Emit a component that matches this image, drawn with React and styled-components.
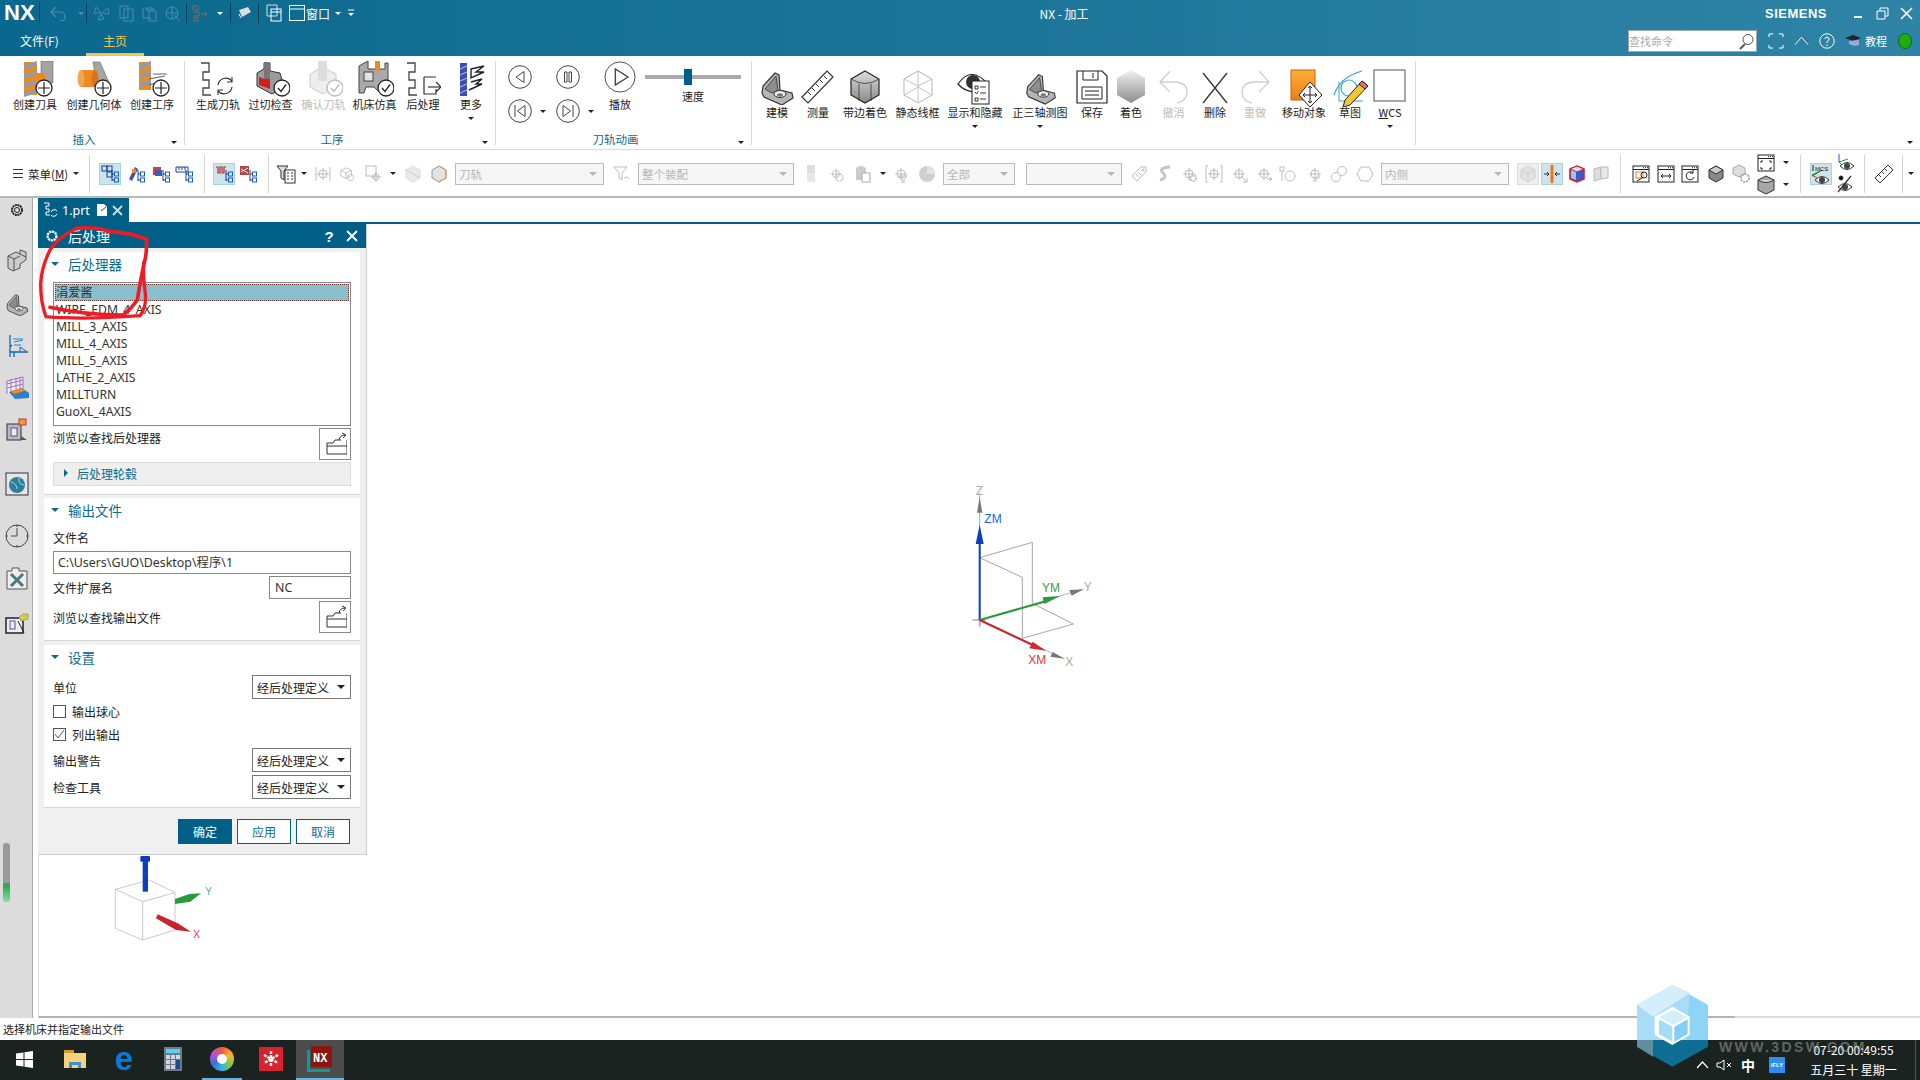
import React from 'react';
import styled, { createGlobalStyle } from 'styled-components';

const Global = createGlobalStyle`
  html, body { margin: 0; padding: 0; background: #fff; overflow: hidden; }
  * { box-sizing: border-box; }
  body { font-family: "Noto Sans CJK SC", "Noto Sans", sans-serif; color: #222; }
`;

const Page = styled.div`position: relative; width: 1920px; height: 1080px; display: flex; flex-direction: column; overflow: hidden; background: #fff;`;
const Head = styled.header`height: 56px; background: linear-gradient(90deg, #0a688e 0%, #1b7598 50%, #2f84a6 100%); color: #fff;`;
const QatRow = styled.div`height: 26px; display: grid; grid-template-columns: 1037px 54px 1fr; align-items: center;`;
const Qat = styled.div`display: flex; align-items: center; height: 26px;`;
const Logo = styled.div`width: 39px; padding-left: 4px; font: bold 22px/26px "Liberation Sans", sans-serif; letter-spacing: 0;`;
const QatSep = styled.span`width: 1px; height: 20px; background: #043f58;`;
const QatSlot = styled.span`width: ${p => p.$w}px; display: flex; justify-content: center; align-items: center; font-size: 12px; color: ${p => p.$dim ? '#4b8ead' : '#fff'};`;
const Tri = styled.span`display: inline-block; width: 0; height: 0; border-left: ${p => p.$s || 3}px solid transparent; border-right: ${p => p.$s || 3}px solid transparent; border-top: ${p => p.$s || 3}px solid ${p => p.$c || '#222'};`;
const AppTitle = styled.div`font-size: 12px; text-align: center; white-space: nowrap;`;
const Brand = styled.div`display: flex; align-items: center; justify-content: flex-end; padding-right: 2px; height: 26px;`;
const Siemens = styled.span`font: bold 13px "Liberation Sans", sans-serif; letter-spacing: .5px; margin-right: 19px;`;
const WinBtn = styled.span`width: 24px; display: flex; justify-content: center;`;
const TabRow = styled.div`height: 30px; display: flex; align-items: stretch;`;
const FileTab = styled.div`margin-left: 20px; width: 66px; font-size: 12px; line-height: 26px; padding-top: 2px;`;
const HomeTab = styled.div`width: 58px; text-align: center; font-size: 12px; line-height: 25px; padding-top: 2px; color: #f4c54a; border-bottom: 3px solid #f4c54a;`;
const TabTools = styled.div`margin-left: auto; display: flex; align-items: center; height: 30px;`;
const Search = styled.div`width: 129px; height: 22px; background: #fff; border: 1px solid #9ca6ab; color: #aaa; font-size: 11px; line-height: 20px; display: flex; justify-content: space-between; align-items: center; padding-right: 2px;`;
const ToolSlot = styled.span`width: ${p => p.$w}px; display: flex; justify-content: center; align-items: center; font-size: 11px; color: #fff;`;

const Ribbon = styled.div`height: 94px; padding-top: 5px; display: flex; align-items: flex-start; border-bottom: 1px solid #d9d9d9; background: #fff;`;
const Group = styled.section`position: relative; width: ${p => p.$w}px; height: 84px; padding-left: ${p => p.$pl || 0}px; border-right: 1px solid #ddd; ${p => p.$grow ? 'flex: 1; border-right: none;' : ''}`;
const Items = styled.div`display: flex; align-items: flex-start; margin-top: ${p => p.$mt || 0}px;`;
const GroupName = styled.div`position: absolute; left: 0; right: 16px; bottom: -2px; font-size: 11.5px; line-height: 16px; text-align: center; color: #0a6b8c;`;
const GroupMenu = styled.span`position: absolute; right: 7px; bottom: 1px; display: flex;`;
const Item = styled.div`width: ${p => p.$w}px; display: flex; flex-direction: column; align-items: center;`;
const IconBox = styled.div`height: 35px; display: flex; justify-content: center; align-items: flex-start;`;
const Label = styled.div`font-size: 11px; line-height: 16px; white-space: nowrap; color: ${p => p.$dim ? '#bbb' : '#222'};`;
const Under = styled.div`height: 10px; display: flex; align-items: center; margin-top: 1px;`;
const Play = styled.div`display: flex; align-items: flex-start; padding: 0 0 0 12px;`;
const PlayGrid = styled.div`width: 96px; display: grid; grid-template-columns: 48px 48px; row-gap: 10px; padding-top: 4px;`;
const PlayCell = styled.div`display: flex; align-items: center; gap: 8px;`;
const PlayCol = styled.div`width: 32px; display: flex; flex-direction: column; align-items: center; gap: 3px;`;
const SliderCol = styled.div`width: 96px; margin-left: 9px; display: flex; flex-direction: column; align-items: center; padding-top: 8px;`;
const Track = styled.div`width: 96px; height: 16px; position: relative; display: flex; align-items: center; justify-content: center;`;
const TrackLine = styled.div`width: 100%; height: 4px; background: #aaa;`;
const Thumb = styled.div`position: absolute; left: 39px; top: 0; width: 8px; height: 16px; background: #005f87;`;
const SliderName = styled.div`font-size: 11px; line-height: 16px; margin-top: 3px;`;

const Toolbar = styled.div`height: 48px; display: flex; align-items: center; border-bottom: 2px solid #b8b8b8; padding-top: 1px; background: #fff;`;
const MenuBtn = styled.div`width: 84px; padding-left: 13px; display: flex; align-items: center; gap: 5px; font-size: 11.5px;`;
const MenuU = styled.span`text-decoration: underline;`;
const Bars = styled.span`width: 10px; height: 9px; border-top: 1px solid #333; border-bottom: 1px solid #333; position: relative; &::after { content: ""; position: absolute; left: 0; right: 0; top: 3px; height: 1px; background: #333; }`;
const TSep = styled.span`width: ${p => p.$w}px; display: flex; justify-content: center; &::before { content: ""; width: 1px; height: 38px; background: #d5d5d5; }`;
const Spacer = styled.span`width: ${p => p.$w}px; flex: none;`;
const TIcon = styled.span`width: ${p => p.$w}px; flex: none; display: flex; justify-content: center; align-items: center;`;
const Active = styled.span`width: 22px; height: 22px; display: flex; justify-content: center; align-items: center; background: ${p => p.$gray ? '#eee' : '#cde4ec'}; border: 1px solid ${p => p.$gray ? '#ddd' : '#a9d2df'};`;
const Combo = styled.div`width: ${p => p.$w}px; flex: none; height: 22px; border: 1px solid #bbb; background: #f6f6f6; color: #b5b5b5; font-size: 11.5px; line-height: 20px; padding: 0 6px 0 3px; display: flex; justify-content: space-between; align-items: center;`;
const Stack = styled.span`width: ${p => p.$w}px; flex: none; display: flex; flex-direction: column; align-items: center; gap: ${p => p.$gap || 2}px;`;

const Main = styled.div`height: 820px; display: flex;`;
const Side = styled.aside`width: 33px; background: #dcdcdc; border-right: 1px solid #a9a9a9; position: relative; padding-left: 2px; display: flex; flex-direction: column; align-items: center;`;
const SideIcon = styled.div`height: 24px; margin-top: ${p => p.$gap || 0}px; display: flex; align-items: center; justify-content: center; width: 30px;`;
const Gauge = styled.div`position: absolute; left: 3px; top: 645px; width: 7px; height: 59px; border-radius: 3px; background: linear-gradient(#9a9a9a 0 68%, #35a85a 68% 74%, #7fe39b 100%);`;
const Work = styled.div`flex: 1; padding-left: 5px; display: flex; flex-direction: column;`;
const TabStrip = styled.div`height: 26px; border-bottom: 2px solid #005f87; flex: none;`;
const DocTab = styled.div`width: 91px; height: 24px; background: #005f87; color: #fff; font-size: 12.5px; display: flex; align-items: center; padding-left: 5px; font-family: "Noto Sans", sans-serif;`;
const DocName = styled.span`margin: 0 6px 0 3px;`;
const View = styled.div`flex: 1; position: relative; border-left: 1px solid #ddd; border-bottom: 2px solid #b4b4b4;`;
const Dialog = styled.div`width: 329px; margin-left: -1px; background: #f0f0f0; border-right: 1px solid #ccc; border-bottom: 1px solid #ccc; font-size: 12px;`;
const DialogHead = styled.div`height: 24px; background: #005f87; color: #fff; display: flex; align-items: center; padding: 0 2px 0 7px; font-size: 14px;`;
const DialogTitle = styled.span`margin-left: 9px; flex: 1;`;
const HeadBtn = styled.span`width: ${p => p.$w}px; display: flex; justify-content: center; font: bold 15px "Liberation Sans", sans-serif;`;
const Body = styled.div`padding: 4px 6px 0;`;
const Sec = styled.section`background: #fff; border-bottom: 1px solid #d6d6d6; padding: 0 9px ${p => p.$pb || 8}px; margin-bottom: ${p => p.$mb ?? 3}px;`;
const SecHead = styled.div`height: 26px; padding-bottom: 2px; display: flex; align-items: center; gap: 9px; margin-left: -2px; font-size: 13.5px; color: #0a6b8c;`;
const PostList = styled.div`height: 144px; margin-top: 4px; border: 1px solid #888; padding: 1px; font: 12.2px/17px "Noto Sans", "Noto Sans CJK SC", sans-serif; color: #333;`;
const PostRow = styled.div`height: 17px; padding-left: 1px; white-space: nowrap; ${p => p.$on ? 'background: #8bbfcf; outline: 1px dotted #7a3a30; outline-offset: -1px;' : ''}`;
const BrowseRow = styled.div`height: 32px; margin-top: ${p => p.$mt}px; display: flex; justify-content: space-between; align-items: ${p => p.$center ? 'center' : 'flex-start'}; line-height: ${p => p.$center ? 'normal' : '20px'};`;
const IconBtn = styled.span`width: 32px; height: 32px; border: 1px solid #888; background: #fff; display: flex; justify-content: center; align-items: center;`;
const SubPanel = styled.div`height: 24px; margin-top: 2px; background: #eee; border: 1px solid #ddd; color: #0a6b8c; display: flex; align-items: center; padding: 0 0 2px 10px; gap: 9px; font-size: 12px;`;
const FieldLabel = styled.div`height: 27px; line-height: 27px;`;
const Input = styled.div`height: 23px; border: 1px solid #888; padding-left: ${p => p.$pl || 4}px; font: 12.4px/21px "Noto Sans", "Noto Sans CJK SC", sans-serif; width: ${p => p.$w ? p.$w + 'px' : 'auto'}; color: #333;`;
const FieldRow = styled.div`display: flex; justify-content: space-between; align-items: center; margin-top: ${p => p.$mt || 0}px;`;
const Select = styled.div`width: 99px; height: 24px; border: 1px solid #777; padding: 0 5px 0 4px; display: flex; justify-content: space-between; align-items: center; font-size: 12px;`;
const CheckRow = styled.label`height: 23px; display: flex; align-items: center; gap: 6px;`;
const CheckGroup = styled.div`margin-top: 1px;`;
const Box = styled.span`width: 13px; height: 13px; border: 1px solid #555; display: flex; align-items: center; justify-content: center;`;
const Actions = styled.div`display: flex; justify-content: flex-end; gap: 5px; padding: 11px 16px 10px 0;`;
const Btn = styled.button`width: 54px; height: 25px; padding: 0; font: 12px "Noto Sans CJK SC", sans-serif; border: 1px solid #005f87; background: ${p => p.$primary ? '#005f87' : '#fff'}; color: ${p => p.$primary ? '#fff' : '#0a6b8c'};`;
const TriadMain = styled.svg`position: absolute; left: 902px; top: 236px;`;
const TriadSmall = styled.svg`position: absolute; left: 62px; top: 631px;`;

const Status = styled.div`height: 22px; font-size: 11px; line-height: 22px; padding-left: 3px; color: #222; background: #fff;`;
const Taskbar = styled.footer`height: 40px; background: #1b2321; display: flex; align-items: stretch; color: #fff;`;
const TaskIcon = styled.div`width: ${p => p.$w}px; margin-left: ${p => p.$ml || 0}px; padding-left: ${p => p.$pl || 0}px; display: flex; align-items: center; justify-content: center; background: ${p => p.$on ? '#4a4d4b' : 'transparent'}; border-bottom: 2px solid ${p => p.$line ? '#6ab0de' : 'transparent'};`;
const EdgeE = styled.span`font: bold 33px/36px "Liberation Sans", sans-serif; color: #0a78d7;`;
const Swirl = styled.span`width: 24px; height: 24px; border-radius: 50%; background: conic-gradient(#f05a3c, #f9b233, #8cc63f, #2fb8e6, #3f6fd8, #b84fd0, #f05a3c); display: flex; align-items: center; justify-content: center; &::after { content: ""; width: 10px; height: 10px; border-radius: 50%; background: #fff; }`;
const Tray = styled.div`margin-left: auto; display: flex; align-items: center; padding-top: 10px;`;
const TraySlot = styled.span`width: ${p => p.$w}px; display: flex; justify-content: center; align-items: center; font-size: 14px; font-weight: 700;`;
const Clock = styled.div`width: 123px; margin-top: -10px; font-size: 12px; line-height: 20px; text-align: center;`;
const TrayEdge = styled.span`width: 5px; align-self: stretch; margin-top: -10px; border-left: 1px solid #555;`;
const Fly = styled.span`width: 16px; height: 16px; background: #2f8cf0; font: bold 6px/16px "Liberation Sans", sans-serif; text-align: center; color: #fff;`;
const Scribble = styled.svg`position: absolute; left: 38px; top: 222px; pointer-events: none;`;
const Mark = styled.svg`position: absolute; left: 1633px; top: 980px; pointer-events: none;`;
const MarkText = styled.div`position: absolute; left: 1719px; top: 1039px; font: bold 14px/16px "Liberation Sans", sans-serif; letter-spacing: 2.4px; color: rgba(170,170,170,.5); pointer-events: none;`;
const MarkGlow = styled.div`position: absolute; left: 1735px; top: 1013px; width: 185px; height: 9px; background: rgba(255,255,255,.55); pointer-events: none;`;

const Svg = ({ w = 20, h = 20, vb, children }) => <svg width={w} height={h} viewBox={vb || `0 0 ${w} ${h}`} fill="none">{children}</svg>;

const Mill = ({ x, y, w = 13, h = 32 }) => {
  const bands = [];
  for (let i = 0; i * 9 < h - 4; i++) bands.push(<polygon key={i} points={`${x},${y + i * 9 + 3} ${x + w},${y + i * 9 - 1} ${x + w},${y + i * 9 + 4} ${x},${y + i * 9 + 8}`} fill="#9a9a9a" />);
  return <g><rect x={x} y={y} width={w} height={h} fill="#ee8a1f" />{bands}</g>;
};
const Badge = ({ type = 'plus', dim }) => (
  <g>
    <circle cx="27" cy="27" r="8" fill="#fff" stroke={dim ? '#bbb' : '#222'} strokeWidth="1.3" />
    {type === 'plus'
      ? <path d="M27 21v12M21 27h12" stroke="#222" strokeWidth="1.2" />
      : <path d="M23 27l3 3.5 5-7" stroke={dim ? '#bbb' : '#222'} strokeWidth="1.3" />}
  </g>
);
const SCurve = ({ c = '#444' }) => <path d="M2 2h8v9H4v8h6v8H4v7h8" stroke={c} strokeWidth="1.3" />;

const bracket = (s = 1) => (
  <g transform={`scale(${s})`}>
    <path d="M3 24L4 17 16 4l4 2 1 15 12 3 1 5-11 7-18-8z" fill="#b5b5b5" stroke="#333" strokeWidth="1.2" />
    <path d="M6 20L17 7l2 14-6 3z" fill="#8d8d8d" stroke="#333" strokeWidth=".8" />
    <ellipse cx="21" cy="25" rx="6" ry="3.5" fill="#eee" stroke="#333" />
    <ellipse cx="21" cy="26" rx="3" ry="1.7" fill="#777" />
  </g>
);

const big = {
  createTool: <Svg w={42} h={36}><Mill x={10} y={1} h={33} /><rect x="27" y="0" width="12" height="22" fill="#a3a3a3" stroke="#555" strokeWidth=".5" /><rect x="22" y="12" width="9" height="10" fill="#ef8a1e" /><g transform="translate(3,0)"><Badge /></g></Svg>,
  createGeom: <Svg w={42} h={36}><polygon points="20,1 27,1 38,26 30,34 24,28" fill="#a5a5a5" stroke="#666" strokeWidth=".6" /><rect x="8" y="9" width="14" height="17" fill="#ee8a1f" /><ellipse cx="8" cy="17.5" rx="3.5" ry="8.5" fill="#f5a64c" /><ellipse cx="22" cy="17.5" rx="3.5" ry="8.5" fill="#d9741a" /><g transform="translate(3,0)"><Badge /></g></Svg>,
  createOp: <Svg w={42} h={36}><Mill x={8} y={1} w={12} h={28} /><path d="M22 13h14M18 18l16-3M18 24l10-3" stroke="#666" strokeWidth="1.2" /><g transform="translate(3,0)"><Badge /></g></Svg>,
  genPath: <Svg w={38} h={36}><SCurve /><path d="M19 24a8 8 0 0 1 14-4M33 26a8 8 0 0 1-14 4" stroke="#333" strokeWidth="1.2" /><path d="M33 16v5h-5M19 34v-5h5" stroke="#333" strokeWidth="1.1" /></Svg>,
  gouge: <Svg w={38} h={36}><polygon points="5,12 12,8 12,2 18,2 18,10 28,12 32,26 20,33 5,25" fill="#9c9c9c" stroke="#333" /><rect x="12" y="1" width="6" height="20" fill="#777" /><polygon points="7,16 13,18 18,18 18,28 7,24" fill="#d11f1f" /><g transform="translate(3,0)"><Badge type="check" /></g></Svg>,
  verify: <Svg w={38} h={36}><polygon points="5,13 17,6 31,13 31,26 18,33 5,26" fill="#eee" stroke="#ccc" /><rect x="13" y="0" width="9" height="20" fill="#ddd" /><g transform="translate(3,0)"><Badge type="check" dim /></g></Svg>,
  sim: <Svg w={38} h={36}><polygon points="3,5 12,0 12,8 29,8 29,2 32,2 32,30 22,30 18,26 10,26 8,32 3,32" fill="#aaa" stroke="#444" /><rect x="8" y="11" width="9" height="9" fill="#e2e2e2" stroke="#444" /><rect x="19" y="0" width="5" height="10" fill="#ee8a1f" /><g transform="translate(3,0)"><Badge type="check" /></g></Svg>,
  post: <Svg w={36} h={36}><SCurve /><path d="M19 16h12M19 16v17h12v-5M31 21l5 5-5 5" stroke="#333" strokeWidth="1.2" /><path d="M23 26h13" stroke="#333" strokeWidth="1.2" /></Svg>,
  more: <Svg w={34} h={36}><rect x="6" y="2" width="7" height="33" fill="#3a4fb0" /><path d="M6 8l7-3M6 14l7-3M6 20l7-3M6 26l7-3M6 32l7-3" stroke="#9db0ea" strokeWidth="1.2" /><path d="M17 8l13-3-8 6h8L17 17zM17 21l11-3-6 5h6l-13 6" stroke="#222" strokeWidth="1.4" /></Svg>,
  model: <Svg w={36} h={36}>{bracket()}</Svg>,
  measure: <Svg w={36} h={36}><polygon points="2,28 27,2 33,8 8,34" fill="#fff" stroke="#333" strokeWidth="1.2" /><path d="M8 23l3 3M12 19l3 3M16 15l3 3M20 11l3 3M24 7l3 3" stroke="#333" /></Svg>,
  edges: <Svg w={36} h={36}><defs><linearGradient id="g1" x1="0" x2="0" y1="0" y2="1"><stop offset="0" stopColor="#ddd" /><stop offset="1" stopColor="#888" /></linearGradient></defs><polygon points="18,2 32,10 32,26 18,34 4,26 4,10" fill="url(#g1)" stroke="#222" strokeWidth="1.2" /><path d="M4 10q14 9 28 0M12 15v17M24 15v17" stroke="#333" strokeWidth=".8" /></Svg>,
  wire: <Svg w={36} h={36}><polygon points="18,2 32,10 32,26 18,34 4,26 4,10" stroke="#b5b5b5" /><path d="M4 10l14 7 14-7M18 2v15M18 17v17M4 26l14-8 14 8" stroke="#c4c4c4" /></Svg>,
  showHide: <Svg w={36} h={36}><path d="M1 15q13-19 30 0q-5 7-14 8q-10-1-16-8z" fill="#fff" stroke="#222" strokeWidth="1.2" /><circle cx="16" cy="13" r="7" fill="#333" /><rect x="15" y="12" width="17" height="23" fill="#fff" stroke="#222" /><path d="M18 17h3v3h-3zM23 18h6M18 23l1.5 2 2-3M23 24h6M18 29h3v3h-3zM23 30h6" stroke="#222" strokeWidth=".9" /></Svg>,
  tri: <Svg w={36} h={36}><g transform="translate(2,2) scale(.92)">{bracket()}</g></Svg>,
  save: <Svg w={34} h={36}><path d="M2 2h25l5 5v27H2z" fill="#fff" stroke="#222" strokeWidth="1.2" /><path d="M8 2v9h15V2M18 4v5M7 18h20v12H7zM10 22h14M10 26h14" stroke="#222" /></Svg>,
  shaded: <Svg w={34} h={36}><defs><linearGradient id="g2" x1="0" x2="0" y1="0" y2="1"><stop offset="0" stopColor="#f1f1f1" /><stop offset="1" stopColor="#8d8d8d" /></linearGradient></defs><polygon points="17,1 31,9 31,26 17,34 3,26 3,9" fill="url(#g2)" /></Svg>,
  undo: <Svg w={34} h={36}><path d="M13 2L3 13l10 10M3 13h16q11 1 11 10 0 9-10 11" stroke="#cfcfcf" strokeWidth="1.3" /></Svg>,
  del: <Svg w={30} h={36}><path d="M3 4l24 30M27 4L3 34" stroke="#333" strokeWidth="1.3" /></Svg>,
  redo: <Svg w={34} h={36}><path d="M21 2l10 11-10 10M31 13H15Q4 14 4 23q0 9 10 11" stroke="#cfcfcf" strokeWidth="1.3" /></Svg>,
  move: <Svg w={36} h={38}><defs><linearGradient id="g3" x1="0" x2="0" y1="0" y2="1"><stop offset="0" stopColor="#fbb034" /><stop offset="1" stopColor="#ee7d1a" /></linearGradient></defs><rect x="5" y="1" width="24" height="30" fill="url(#g3)" stroke="#c5600f" /><polygon points="24,13 36,26 24,38 13,26" fill="#fff" stroke="#222" /><path d="M24 17v17M17 26h14M22 19l2-2 2 2M22 32l2 2 2-2M19 24l-2 2 2 2M29 24l2 2-2 2" stroke="#222" /></Svg>,
  sketch: <Svg w={36} h={38}><path d="M2 26Q8 8 30 2" stroke="#2aa9d6" strokeWidth="1.2" /><circle cx="17" cy="19" r="8" stroke="#2aa9d6" strokeWidth="1.2" /><path d="M7 13v19h24" stroke="#2aa9d6" /><polygon points="30,12 36,17 18,36 11,38 13,31" fill="#f3c63a" stroke="#222" /><polygon points="30,12 36,17 33,20 27,15" fill="#e87070" stroke="#222" /></Svg>,
  wcs: <Svg w={34} h={38}><rect x="1" y="1" width="31" height="31" fill="#fff" stroke="#8a8a8a" strokeWidth="1.5" /></Svg>,
};

const Tree = ({ a = '#1c5cb0', top }) => <Svg w={18} h={18}>{top}<path d="M11 5v11M11 9h3M11 15h3" stroke="#123e9a" /><rect x="13.5" y="7" width="4" height="4" stroke={a} /><rect x="13.5" y="13" width="4" height="4" stroke={a} /></Svg>;
const Grey = ({ w = 18, children }) => <Svg w={w} h={18}><g stroke="#bdbdbd" fill="none">{children}</g></Svg>;
const Cross = () => <g><circle cx="9" cy="9" r="4" /><path d="M9 3v12M3 9h12" /></g>;
const Win = ({ children }) => <Svg w={18} h={20}><rect x="1" y="2" width="16" height="16" fill="#fff" stroke="#222" /><path d="M1 5.5h16" stroke="#222" /><path d="M11 3.7h1M13 3.7h1M15 3.7h1" stroke="#222" />{children}</Svg>;
const Eye = ({ x = 0, y = 0 }) => <g transform={`translate(${x},${y})`}><path d="M1 7q7-7 14 0q-7 7-14 0z" fill="#fff" stroke="#333" /><circle cx="8" cy="7" r="3" fill="#444" /></g>;

const small = {
  t1: <Tree top={<g><rect x="1" y="1" width="5" height="5" stroke="#123e9a" /><rect x="6" y="1" width="5" height="5" stroke="#123e9a" /><rect x="6" y="7" width="5" height="5" stroke="#123e9a" /></g>} />,
  t2: <Tree top={<g><polygon points="2,14 8,2 11,4 5,16" fill="#3953b5" /><rect x="5" y="4" width="4" height="4" fill="#ee8a1f" /></g>} />,
  t3: <Tree top={<g><rect x="1" y="2" width="8" height="8" fill="#d0403a" /><rect x="3" y="5" width="7" height="6" fill="#3560c0" /></g>} />,
  t4: <Tree top={<path d="M1 2h12M1 2v5h12V2M4 2v3M7 2v3M10 2v3" stroke="#1c3d9a" />} />,
  t5: <Tree top={<path d="M1 2h2v6h2V2h2v6h2V2h2" stroke="#c12a2a" strokeWidth="1.2" />} />,
  t6: <Tree top={<g><rect x="1" y="1" width="9" height="9" fill="#b04848" /><path d="M2 4l7 4M2 7l7-4" stroke="#eee" /></g>} />,
  filter: <Svg w={22} h={20}><path d="M1 2h11L8 7v9L5 14V7z" fill="#ddd" stroke="#333" /><rect x="9" y="6" width="10" height="13" fill="#fff" stroke="#333" /><path d="M11 9h2M15 9h2M11 12h2M15 12h2M11 15h2M15 15h2" stroke="#333" /></Svg>,
  gCross: <Grey><Cross /><path d="M2 2v14M16 2v14" /></Grey>,
  gCube: <Grey><path d="M2 5l6-3 6 3v6l-6 3-6-3zM2 5l6 3 6-3M8 8v6" /><circle cx="13" cy="13" r="3.5" /></Grey>,
  gSq: <Grey><rect x="2" y="1" width="10" height="10" /><circle cx="12" cy="12" r="3" /><path d="M12 7v10M7 12h10" /></Grey>,
  gHex: <Svg w={18} h={18}><polygon points="9,1 16,5 16,13 9,17 2,13 2,5" fill="#e9e9e9" stroke="#ddd" /><path d="M2 5l7 4 7 4" stroke="#ccc" /></Svg>,
  cube2: <Svg w={18} h={18}><polygon points="9,1 16,5 16,13 9,17 2,13 2,5" fill="#e2e2e2" stroke="#999" /><path d="M9 1l7 4v8l-7 4" stroke="#d9925a" /></Svg>,
  gFilter: <Grey><path d="M2 2h13L10 8v7L7 13V8z" /><path d="M12 13a3 3 0 0 1 5 1" /></Grey>,
  gParts: <Svg w={18} h={20}><rect x="5" y="1" width="8" height="8" fill="#ddd" /><rect x="5" y="9" width="8" height="9" fill="#e8e8e8" /></Svg>,
  gLink: <Grey><Cross /><circle cx="13" cy="13" r="4" /></Grey>,
  gDoc: <Svg w={20} h={20}><ellipse cx="9" cy="5" rx="5" ry="3" fill="#ccc" /><rect x="4" y="5" width="10" height="11" fill="#ccc" /><rect x="10" y="9" width="8" height="9" fill="#fff" stroke="#aaa" /></Svg>,
  gFunnel: <Grey><Cross /><path d="M7 11h8l-3 3v4l-2-1v-3z" /></Grey>,
  gPie: <Svg w={18} h={18}><circle cx="9" cy="9" r="8" fill="#cfcfcf" /><path d="M9 1a8 8 0 0 1 8 8H9z" fill="#e2e2e2" /></Svg>,
  gTag: <Grey><path d="M2 11l9-9h5v5l-9 9z" /><circle cx="13" cy="5" r="1" /><path d="M6 9l3 3M8 7l3 3" /></Grey>,
  gSnake: <Svg w={18} h={20}><path d="M4 16q8-2 3-7t7-6" stroke="#c5c5c5" strokeWidth="3" /></Svg>,
  gGear: <Grey><Cross /><circle cx="13" cy="13" r="3" strokeDasharray="2 1" strokeWidth="2" /></Grey>,
  gBr: <Grey><Cross /><path d="M3 1H1v16h2M15 1h2v16h-2" /></Grey>,
  gArr: <Grey><Cross /><path d="M11 11l6 6M13 17h4v-4" /></Grey>,
  gTurn: <Grey><Cross /><path d="M12 14h5M14 12l3 2-3 2" /></Grey>,
  gTree: <Grey><rect x="1" y="2" width="4" height="4" /><path d="M3 6v10" /><circle cx="11" cy="11" r="5" /></Grey>,
  gStep: <Grey><Cross /><path d="M7 16h3v-3h3v-3" /></Grey>,
  gChain: <Grey><circle cx="6" cy="12" r="4.5" /><circle cx="12" cy="6" r="4.5" /></Grey>,
  gHexO: <Grey><polygon points="5,2 13,2 17,9 13,16 5,16 1,9" /></Grey>,
  gBox: <Svg w={18} h={18}><polygon points="9,1 16,5 16,13 9,17 2,13 2,5" fill="#e2e2e2" stroke="#cfcfcf" /><path d="M2 5l7 4 7-4M9 9v8" stroke="#ccc" /></Svg>,
  mid: <Svg w={18} h={18}><path d="M9 0v18" stroke="#e87b14" strokeWidth="3" /><path d="M1 9h5M12 9h5M4 7l2 2-2 2M14 7l-2 2 2 2" stroke="#333" /></Svg>,
  redCube: <Svg w={18} h={18}><polygon points="9,1 16,4 16,14 9,17 2,14 2,4" fill="#3a5cc8" stroke="#e21a2c" strokeWidth="1.6" /><polygon points="2,4 9,1 16,4 9,7" fill="#cfe3f8" stroke="#e21a2c" /><polygon points="3,5 8,7 8,15 3,13" fill="#9fc3ee" /></Svg>,
  book: <Svg w={18} h={18}><polygon points="2,4 9,2 9,14 2,16" fill="#ddd" stroke="#bbb" /><polygon points="9,2 16,2 16,13 9,14" fill="#e9e9e9" stroke="#bbb" /></Svg>,
  w1: <Win><rect x="4" y="8" width="7" height="6" stroke="#e0821e" /><circle cx="12" cy="11" r="3" stroke="#222" /><path d="M5 17l5-3" stroke="#222" /></Win>,
  w2: <Win><path d="M4 12h10M4 12l2-2M4 12l2 2M14 12l-2-2M14 12l-2 2" stroke="#222" /></Win>,
  w3: <Win><path d="M12 9a4 4 0 1 0 1 4M12 6v3h-3" stroke="#222" /></Win>,
  s1: <Svg w={18} h={18}><polygon points="9,1 16,5 16,13 9,17 2,13 2,5" fill="#888" stroke="#333" /><polygon points="9,1 16,5 9,9 2,5" fill="#ccc" stroke="#333" /></Svg>,
  s2: <Svg w={20} h={20}><polygon points="8,1 14,4 14,10 8,13 2,10 2,4" fill="#ddd" stroke="#aaa" /><circle cx="14" cy="14" r="4" stroke="#aaa" strokeWidth="2" strokeDasharray="2 1" /></Svg>,
  s3: <Win><path d="M4 8h2M4 8v2M14 8h-2M14 8v2M4 16h2M4 16v-2M14 16h-2M14 16v-2" stroke="#222" /></Win>,
  s4: <Svg w={18} h={20}><polygon points="9,1 17,5 17,15 9,19 1,15 1,5" fill="#a7a7a7" stroke="#333" /><path d="M1 5q8 5 16 0" stroke="#333" fill="#ddd" /></Svg>,
  mcs: <svg width="19" height="20" viewBox="0 0 19 20"><path d="M2 1v6M1 12L11 6" stroke="#222" /><text x="4" y="7" fontSize="6" fontFamily="Liberation Sans" fill="#222">MCS</text><path d="M1 11l5 3" stroke="#d22" /><path d="M1 11l8-4" stroke="#2a2" /><Eye x={3} y={9} /></svg>,
  eye1: <svg width="18" height="18" viewBox="0 0 18 18"><path d="M3 0v8" stroke="#1864c4" /><path d="M3 8l9-3" stroke="#2a2" /><path d="M3 8l3 3" stroke="#d22" /><Eye x={3} y={5} /></svg>,
  eye2: <svg width="18" height="20" viewBox="0 0 18 20"><Eye x={1} y={6} /><path d="M2 18L15 2" stroke="#333" strokeWidth="1.2" /><circle cx="5" cy="4" r="2" stroke="#333" /></svg>,
  ruler: <Svg w={20} h={20}><polygon points="1,14 14,1 19,6 6,19" fill="#fff" stroke="#333" /><path d="M5 11l2 2M8 8l2 2M11 5l2 2" stroke="#333" /></Svg>,
};

const toolbarItems = [
  ['sep', 10], ['sp', 3], ['ic', 26, 't1', 'a'], ['ic', 26, 't2'], ['ic', 24, 't3'], ['ic', 22, 't4'], ['sp', 4], ['sep', 10],
  ['ic', 30, 't5', 'a'], ['ic', 18, 't6'], ['sp', 6], ['sep', 10], ['ic', 28, 'filter'], ['ar', 6], ['ic', 32, 'gCross'], ['ic', 16, 'gCube'],
  ['ic', 35, 'gSq'], ['ar', 6], ['ic', 34, 'gHex'], ['ic', 18, 'cube2'], ['sp', 7], ['co', 149, '刀轨'], ['ic', 34, 'gFilter'], ['co', 156, '整个装配'],
  ['ic', 34, 'gParts'], ['ic', 16, 'gLink'], ['ic', 36, 'gDoc'], ['ar', 6], ['ic', 30, 'gFunnel'], ['ic', 22, 'gPie'], ['sp', 5], ['co', 72, '全部'], ['sp', 11], ['co', 96, ''],
  ['ic', 34, 'gTag'], ['ic', 18, 'gSnake'], ['ic', 30, 'gGear'], ['ic', 20, 'gBr'], ['ic', 30, 'gArr'], ['ic', 20, 'gTurn'], ['ic', 28, 'gTree'], ['ic', 26, 'gStep'], ['ic', 22, 'gChain'], ['ic', 30, 'gHexO'],
  ['sp', 1], ['co', 128, '内侧'], ['sp', 8], ['ic', 22, 'gBox', 'g'], ['sp', 2], ['ic', 22, 'mid', 'a'], ['ic', 28, 'redCube'], ['ic', 20, 'book'], ['sp', 4], ['sep', 10],
  ['ic', 32, 'w1'], ['ic', 18, 'w2'], ['ic', 30, 'w3'], ['ic', 22, 's1'], ['ic', 28, 's2'], ['st', 22, 's3', 's4'], ['ars', 18], ['sep', 10], ['sp', 4], ['ic', 23, 'mcs', 'a'], ['st', 26, 'eye1', 'eye2'], ['sep', 12], ['ic', 28, 'ruler'], ['sep', 8], ['ar', 10],
];

const ToolEntry = ({ it }) => {
  const [k, w, a, b] = it;
  if (k === 'sep') return <TSep $w={w} />;
  if (k === 'sp') return <Spacer $w={w} />;
  if (k === 'co') return <Combo $w={w}><span>{a}</span><Tri $s={4} $c="#b5b5b5" /></Combo>;
  if (k === 'ar') return <TIcon $w={w}><Tri $c="#222" /></TIcon>;
  if (k === 'ars') return <Stack $w={w} $gap={19}><Tri /><Tri /></Stack>;
  if (k === 'st') return <Stack $w={w}>{small[a]}{small[b]}</Stack>;
  return <TIcon $w={w}>{b ? <Active $gray={b === 'g'}>{small[a]}</Active> : small[a]}</TIcon>;
};

const RItem = ({ w, icon, label, dim, menu, u }) => (
  <Item $w={w}>
    <IconBox>{big[icon]}</IconBox>
    <Label $dim={dim}>{u ? <MenuU>W</MenuU> : null}{label}</Label>
    {menu && <Under><Tri /></Under>}
  </Item>
);

const PlayBtn = ({ kind, size = 24 }) => (
  <svg width={size} height={size} viewBox="0 0 24 24">
    <circle cx="12" cy="12" r="11.3" fill="#fff" stroke="#444" strokeWidth={size > 24 ? .7 : 1} />
    {kind === 'back' && <path d="M16 6.5v11L8 12z" stroke="#444" fill="none" />}
    {kind === 'pause' && <path d="M8.5 7h2.5v10H8.5zM13 7h2.5v10H13z" stroke="#444" fill="none" />}
    {kind === 'prev' && <path d="M17 6.5v11L9.5 12zM7 6v12" stroke="#444" fill="none" />}
    {kind === 'next' && <path d="M7 6.5v11L14.5 12zM17 6v12" stroke="#444" fill="none" />}
    {kind === 'play' && <path d="M8.5 6v12L18 12z" stroke="#444" fill="none" />}
  </svg>
);

const FolderBtn = () => (
  <IconBtn>
    <Svg w={24} h={24}><path d="M4 11v11h20V8M4 11h6l2-3h6" stroke="#333" fill="none" /><path d="M4 14h20" stroke="#333" /><path d="M16 8q1-5 6-5M19 1l4 2-3 3" stroke="#333" /></Svg>
  </IconBtn>
);

const ChoiceRow = ({ label, mt }) => (
  <FieldRow $mt={mt}><span>{label}</span><Select><span>经后处理定义</span><Tri $s={4} /></Select></FieldRow>
);

const QatDim = ({ w, children }) => <QatSlot $w={w} $dim>{children}</QatSlot>;

export default function App() {
  const dim = '#4b8ead';
  return (
    <Page>
      <Global />
      <Head>
        <QatRow>
          <Qat>
            <Logo>NX</Logo><QatSep />
            <QatDim w={36}><Svg w={18} h={16}><path d="M7 2L2 7l5 5M2 7h9q5 0 5 5t-5 3" stroke={dim} strokeWidth="1.2" /></Svg></QatDim>
            <QatDim w={10}><Tri $c={dim} /></QatDim>
            <QatSep />
            <QatDim w={28}><Svg w={17} h={16}><path d="M8 8L3 2l-2 6zM9 8l6-5 1 6zM8 9l-3 6 6-1z" stroke={dim} /></Svg></QatDim>
            <QatDim w={23}><Svg w={15} h={17}><path d="M1 1h8v12H1zM5 4h9v12H5z" stroke={dim} /></Svg></QatDim>
            <QatDim w={23}><Svg w={15} h={17}><path d="M4 3h7v2H4zM1 3v10h8M7 6h7v10H7z" stroke={dim} /></Svg></QatDim>
            <QatDim w={23}><Svg w={16} h={17}><circle cx="7" cy="8" r="6" stroke={dim} /><path d="M1 8h12M7 2v12M9 10l6 6" stroke={dim} /></Svg></QatDim>
            <Spacer $w={2} /><QatSep />
            <QatSlot $w={25}><Svg w={15} h={17}><path d="M1 1h5v4H1M1 1v4M2 7h5v4H2M1 13h5v3H1M9 9h6M12 6l3 3-3 3" stroke="#8a6a5a" /></Svg></QatSlot>
            <QatSlot $w={16}><Tri $c="#fff" /></QatSlot>
            <Spacer $w={2} /><QatSep />
            <QatSlot $w={27}><Svg w={16} h={14}><path d="M2 4l9-3 3 5-9 5z" fill="#ddd" /><path d="M2 8l2 4" stroke="#fff" /></Svg></QatSlot>
            <QatSep />
            <QatSlot $w={29}><Svg w={16} h={18}><path d="M1 1h10v11H1z" stroke="#ddd" /><rect x="5" y="5" width="10" height="12" fill="none" stroke="#fff" /><path d="M5 8h10" stroke="#fff" /></Svg></QatSlot>
            <QatSlot $w={17}><Svg w={16} h={16}><rect x=".5" y=".5" width="15" height="15" stroke="#fff" /><path d="M0 4h16" stroke="#fff" /></Svg></QatSlot>
            <QatSlot $w={26}>窗口</QatSlot>
            <QatSlot $w={13}><Tri $c="#fff" /></QatSlot>
            <QatSlot $w={13}><Svg w={8} h={8}><path d="M1 1h6" stroke="#fff" /><path d="M1 4h6L4 7z" fill="#fff" /></Svg></QatSlot>
          </Qat>
          <AppTitle>NX - 加工</AppTitle>
          <Brand>
            <Siemens>SIEMENS</Siemens>
            <WinBtn><Svg w={10} h={12}><path d="M1 10h8" stroke="#fff" strokeWidth="2" /></Svg></WinBtn>
            <WinBtn><Svg w={13} h={13}><path d="M1 4h8v8H1zM4 4V1h8v8H9" stroke="#fff" /></Svg></WinBtn>
            <WinBtn><Svg w={13} h={13}><path d="M1 1l11 11M12 1L1 12" stroke="#fff" strokeWidth="1.6" /></Svg></WinBtn>
          </Brand>
        </QatRow>
        <TabRow>
          <FileTab>文件(F)</FileTab>
          <HomeTab>主页</HomeTab>
          <TabTools>
            <Search><span>查找命令</span><Svg w={17} h={17}><circle cx="11" cy="6.5" r="5" stroke="#555" /><path d="M8 11l-5 5" stroke="#555" strokeWidth="2" /></Svg></Search>
            <ToolSlot $w={37}><Svg w={16} h={16}><path d="M1 4V1h4M11 1h4v3M15 12v3h-4M5 15H1v-3" stroke="#fff" /></Svg></ToolSlot>
            <ToolSlot $w={15}><Svg w={16} h={10}><path d="M1 9l7-8 7 8" stroke="#fff" /></Svg></ToolSlot>
            <ToolSlot $w={35}><Svg w={16} h={16}><circle cx="8" cy="8" r="7.2" stroke="#fff" /><path d="M6 6q0-2 2-2t2 2-2 2.5V10M8 11.5v1.5" stroke="#fff" /></Svg></ToolSlot>
            <ToolSlot $w={18}><Svg w={16} h={12}><path d="M0 3l8-3 8 3-8 3z" fill="#222" /><path d="M4 6v3q4 3 10 1V5" fill="#9ad" /></Svg></ToolSlot>
            <ToolSlot $w={28}>教程</ToolSlot>
            <ToolSlot $w={30}><Svg w={14} h={16}><ellipse cx="7" cy="8" rx="6.5" ry="7.5" fill="#1fae12" stroke="#0d6e08" /></Svg></ToolSlot>
          </TabTools>
        </TabRow>
      </Head>

      <Ribbon>
        <Group $w={185} $pl={6}>
          <Items>
            <RItem w={58} icon="createTool" label="创建刀具" />
            <RItem w={60} icon="createGeom" label="创建几何体" />
            <RItem w={56} icon="createOp" label="创建工序" />
          </Items>
          <GroupName>插入</GroupName><GroupMenu><Tri /></GroupMenu>
        </Group>
        <Group $w={311} $pl={7}>
          <Items>
            <RItem w={52} icon="genPath" label="生成刀轨" />
            <RItem w={53} icon="gouge" label="过切检查" />
            <RItem w={53} icon="verify" label="确认刀轨" dim />
            <RItem w={49} icon="sim" label="机床仿真" />
            <RItem w={48} icon="post" label="后处理" />
            <RItem w={48} icon="more" label="更多" menu />
          </Items>
          <GroupName>工序</GroupName><GroupMenu><Tri /></GroupMenu>
        </Group>
        <Group $w={256}>
          <Play>
            <PlayGrid>
              <PlayCell><PlayBtn kind="back" /></PlayCell>
              <PlayCell><PlayBtn kind="pause" /></PlayCell>
              <PlayCell><PlayBtn kind="prev" /><Tri /></PlayCell>
              <PlayCell><PlayBtn kind="next" /><Tri /></PlayCell>
            </PlayGrid>
            <PlayCol><PlayBtn kind="play" size={32} /><Label>播放</Label></PlayCol>
            <SliderCol>
              <Track><TrackLine /><Thumb /></Track>
              <SliderName>速度</SliderName>
            </SliderCol>
          </Play>
          <GroupName>刀轨动画</GroupName><GroupMenu><Tri /></GroupMenu>
        </Group>
        <Group $w={664} $pl={5}>
          <Items $mt={8}>
            <RItem w={40} icon="model" label="建模" />
            <RItem w={42} icon="measure" label="测量" />
            <RItem w={52} icon="edges" label="带边着色" />
            <RItem w={53} icon="wire" label="静态线框" />
            <RItem w={62} icon="showHide" label="显示和隐藏" menu />
            <RItem w={68} icon="tri" label="正三轴测图" menu />
            <RItem w={36} icon="save" label="保存" />
            <RItem w={42} icon="shaded" label="着色" />
            <RItem w={43} icon="undo" label="撤消" dim />
            <RItem w={40} icon="del" label="删除" />
            <RItem w={40} icon="redo" label="重做" dim />
            <RItem w={58} icon="move" label="移动对象" />
            <RItem w={34} icon="sketch" label="草图" />
            <RItem w={46} icon="wcs" label="CS" u menu />
          </Items>
        </Group>
        <Group $grow><GroupMenu><Tri /></GroupMenu></Group>
      </Ribbon>

      <Toolbar>
        <MenuBtn><Bars /><span>菜单(<MenuU>M</MenuU>)</span><Tri /></MenuBtn>
        {toolbarItems.map((it, i) => <ToolEntry key={i} it={it} />)}
      </Toolbar>

      <Main>
        <Side>
          <SideIcon><Svg w={16} h={16}><circle cx="8" cy="8" r="5" stroke="#222" strokeWidth="2" strokeDasharray="2 .6" /><circle cx="8" cy="8" r="2.5" stroke="#222" /></Svg></SideIcon>
          <SideIcon $gap={26}><Svg w={22} h={24}><polygon points="2,8 10,4 14,6 14,2 20,4 20,12 14,16 14,20 7,23 2,20" fill="#ccc" stroke="#555" /><path d="M2 8l6 3 6-3M8 11v12M14 6l6 3" stroke="#555" /></Svg></SideIcon>
          <SideIcon $gap={20}><Svg w={24} h={24} vb="0 0 36 36">{bracket()}</Svg></SideIcon>
          <SideIcon $gap={18}><Svg w={22} h={26}><path d="M4 2v22M4 19h18M8 24v-5M4 14l2-2" stroke="#1460b8" strokeWidth="1.3" /><path d="M7 6h10M8 9l9-2M8 12h7" stroke="#1e88c8" /><path d="M14 18v-4l6 4" stroke="#1460b8" /></Svg></SideIcon>
          <SideIcon $gap={18}><Svg w={24} h={24}><path d="M2 18V5l16-4v12" fill="#eee" stroke="#a070c0" /><path d="M6 3v14M11 2v12M15 1v12M2 8l16-4M2 12l16-4" stroke="#a070c0" /><polygon points="4,16 17,12 24,17 24,22 10,23" fill="#2f7ec8" /><polygon points="6,15 17,12 20,15 9,18" fill="#ee8a1f" /></Svg></SideIcon>
          <SideIcon $gap={18}><Svg w={24} h={24}><rect x="2" y="6" width="14" height="16" fill="#bbb" stroke="#333" /><rect x="6" y="10" width="6" height="8" fill="#eee" stroke="#5a4fa0" /><path d="M16 18l6 4h-6z" fill="#555" /><rect x="14" y="1" width="7" height="6" fill="#e94" stroke="#c33" /></Svg></SideIcon>
          <SideIcon $gap={30}><Svg w={24} h={24}><rect x="1" y="1" width="22" height="22" fill="#e6e6e6" stroke="#333" /><circle cx="12" cy="13" r="8" fill="#2d7f9e" /><path d="M6 10q6 2 6 7M14 6q-1 6 5 7" stroke="#a7d4e2" /></Svg></SideIcon>
          <SideIcon $gap={28}><Svg w={24} h={24}><circle cx="12" cy="12" r="11" stroke="#444" /><path d="M12 4v8H6M12 1v2M12 21v2M1 12h2M21 12h2" stroke="#444" /></Svg></SideIcon>
          <SideIcon $gap={19}><Svg w={24} h={24}><path d="M2 4h5V1h7v3h8v18H2z" fill="#eee" stroke="#555" /><path d="M6 7l12 12M18 7L6 19" stroke="#4a7a80" strokeWidth="3" /></Svg></SideIcon>
          <SideIcon $gap={20}><Svg w={24} h={24}><rect x="1" y="7" width="17" height="15" fill="#eee" stroke="#222" strokeWidth="1.5" /><rect x="5" y="10" width="5" height="8" stroke="#5a4fa0" fill="none" /><path d="M13 10l6 12" stroke="#222" /><path d="M14 6l4-3h5v5l-7 2z" fill="#e8c83a" stroke="#8a7" /></Svg></SideIcon>
          <Gauge />
        </Side>
        <Work>
          <TabStrip>
            <DocTab>
              <Svg w={16} h={16}><path d="M1 1h5v3H3v3h3v3H3v3h4" stroke="#fff" /><path d="M8 10a3.5 3.5 0 0 1 6-1M14 12a3.5 3.5 0 0 1-6 1" stroke="#fff" /></Svg>
              <DocName>1.prt</DocName>
              <Svg w={12} h={14}><path d="M1 1h7l3 3v9H1z" fill="#fff" /><path d="M5 8l5-4" stroke="#005f87" /></Svg>
              <Spacer $w={4} />
              <Svg w={11} h={11}><path d="M1 1l9 9M10 1l-9 9" stroke="#c8dbe3" strokeWidth="1.8" /></Svg>
            </DocTab>
          </TabStrip>
          <View>
            <Dialog>
              <DialogHead>
                <Svg w={14} h={14}><circle cx="7" cy="7" r="4.4" stroke="#fff" strokeWidth="2.4" strokeDasharray="2.2 .7" /></Svg>
                <DialogTitle>后处理</DialogTitle>
                <HeadBtn $w={22}>?</HeadBtn>
                <HeadBtn $w={24}><Svg w={12} h={12}><path d="M1 1l10 10M11 1L1 11" stroke="#fff" strokeWidth="1.8" /></Svg></HeadBtn>
              </DialogHead>
              <Body>
                <Sec>
                  <SecHead><Tri $s={4} $c="#0a6b8c" />后处理器</SecHead>
                  <PostList>
                    <PostRow $on>涓爱酱</PostRow>
                    {['WIRE_EDM_4_AXIS', 'MILL_3_AXIS', 'MILL_4_AXIS', 'MILL_5_AXIS', 'LATHE_2_AXIS', 'MILLTURN', 'GuoXL_4AXIS'].map(n => <PostRow key={n}>{n}</PostRow>)}
                  </PostList>
                  <BrowseRow $mt={2}><span>浏览以查找后处理器</span><FolderBtn /></BrowseRow>
                  <SubPanel><Svg w={4} h={8}><path d="M0 0l4 4-4 4z" fill="#0a6b8c" /></Svg>后处理轮毂</SubPanel>
                </Sec>
                <Sec $pb={7} $mb={4}>
                  <SecHead><Tri $s={4} $c="#0a6b8c" />输出文件</SecHead>
                  <FieldLabel>文件名</FieldLabel>
                  <Input>C:\Users\GUO\Desktop\程序\1</Input>
                  <FieldRow $mt={2}><span>文件扩展名</span><Input $w={82} $pl={5}>NC</Input></FieldRow>
                  <BrowseRow $mt={2} $center><span>浏览以查找输出文件</span><FolderBtn /></BrowseRow>
                </Sec>
                <Sec $pb={8} $mb={0}>
                  <SecHead><Tri $s={4} $c="#0a6b8c" />设置</SecHead>
                  <ChoiceRow label="单位" mt={4} />
                  <CheckGroup>
                    <CheckRow><Box />输出球心</CheckRow>
                    <CheckRow><Box><Svg w={11} h={11}><path d="M1 5l3 4 6-8" stroke="#555" /></Svg></Box>列出输出</CheckRow>
                  </CheckGroup>
                  <ChoiceRow label="输出警告" mt={2} />
                  <ChoiceRow label="检查工具" mt={3} />
                </Sec>
              </Body>
              <Actions>
                <Btn $primary>确定</Btn><Btn>应用</Btn><Btn>取消</Btn>
              </Actions>
            </Dialog>

            <TriadSmall width="120" height="95" viewBox="300 1065 360 285">
              <path d="M343 1168l102-28 77 38-97 27zM343 1168v117l82 35 97-30v-112M425 1205v115" fill="none" stroke="#bbb" strokeWidth="2.4" />
              <rect x="425" y="1080" width="16" height="95" fill="#0b3fc0" />
              <rect x="418" y="1068" width="29" height="17" rx="3" fill="#0b3fc0" />
              <polygon points="522,1197 565,1182 600,1180 568,1205 522,1212" fill="#2a9a3a" />
              <polygon points="470,1243 530,1270 570,1295 525,1290 465,1255" fill="#c4242a" />
              <text x="612" y="1184" fontSize="32" fontFamily="Liberation Sans" fill="#5fb56d">Y</text>
              <text x="576" y="1314" fontSize="32" fontFamily="Liberation Sans" fill="#e0454a">X</text>
            </TriadSmall>

            <TriadMain width="180" height="220" viewBox="0 0 540 660">
              <path d="M116 293l158-46v183M116 293l128 59v183M274 430l123 62-153 43" fill="none" stroke="#999" strokeWidth="2.6" />
              <path d="M116 100v380" stroke="#aaa" strokeWidth="3" />
              <polygon points="116,112 124,158 108,158" fill="#777" />
              <path d="M95 480h40M116 480v20" stroke="#aaa" strokeWidth="5" />
              <path d="M116 480L425 388" stroke="#aaa" strokeWidth="2.5" />
              <polygon points="428,388 385,390 392,407" fill="#777" />
              <path d="M116 480L370 596" stroke="#aaa" strokeWidth="2.5" />
              <polygon points="370,596 335,576 328,590" fill="#777" />
              <path d="M116 480V240" stroke="#0b3fc0" strokeWidth="6" />
              <polygon points="116,195 128,252 104,252" fill="#0b3fc0" />
              <path d="M116 480L310 425" stroke="#2a9a3a" strokeWidth="6" />
              <polygon points="358,408 305,412 310,432" fill="#2a9a3a" />
              <path d="M116 480L275 555" stroke="#c4242a" strokeWidth="6" />
              <polygon points="315,572 275,545 265,565" fill="#d6282e" />
              <g fontFamily="Liberation Sans" fontSize="36">
                <text x="104" y="104" fill="#aaa">Z</text>
                <text x="130" y="189" fill="#1a63f0">ZM</text>
                <text x="303" y="396" fill="#3d9b4a">YM</text>
                <text x="428" y="394" fill="#aaa">Y</text>
                <text x="262" y="612" fill="#d9393e">XM</text>
                <text x="373" y="618" fill="#aaa">X</text>
              </g>
            </TriadMain>
          </View>
        </Work>
      </Main>

      <Status>选择机床并指定输出文件</Status>

      <Taskbar>
        <TaskIcon $w={48}><Svg w={17} h={17}><polygon points="0,2.5 7.5,1.4 7.5,8 0,8" fill="#fff" /><polygon points="8.5,1.2 17,0 17,8 8.5,8" fill="#fff" /><polygon points="0,9 7.5,9 7.5,15.6 0,14.5" fill="#fff" /><polygon points="8.5,9 17,9 17,17 8.5,15.8" fill="#fff" /></Svg></TaskIcon>
        <TaskIcon $w={54}><Svg w={22} h={20}><rect x="0" y="1" width="10" height="4" fill="#d99a2b" /><rect x="0" y="4" width="22" height="15" fill="#f6d27a" /><path d="M5 19v-6h12v6h-3v-3H8v3z" fill="#3a8fd6" /></Svg></TaskIcon>
        <TaskIcon $w={44}><EdgeE>e</EdgeE></TaskIcon>
        <TaskIcon $w={54}><Svg w={18} h={24}><rect width="18" height="24" fill="#6f7a85" /><rect x="2" y="2" width="14" height="4" fill="#5bd0f0" /><path d="M2 8h4v4H2zM7 8h4v4H7zM12 8h4v4h-4zM2 13h4v4H2zM7 13h4v4H7zM2 18h4v4H2zM7 18h4v4H7z" fill="#cfd6dc" /><rect x="12" y="13" width="4" height="9" fill="#1a4f8f" /></Svg></TaskIcon>
        <TaskIcon $w={40} $ml={2} $line><Swirl /></TaskIcon>
        <TaskIcon $w={54} $pl={4}><Svg w={24} h={24}><rect width="24" height="24" fill="#d8232f" /><path d="M12 4v16M5 8l14 8M19 8L5 16" stroke="#fff" strokeWidth="2.4" strokeDasharray="3 1" /></Svg></TaskIcon>
        <TaskIcon $w={48} $on $line><NXTile /></TaskIcon>
        <Tray>
          <TraySlot $w={24}><Svg w={13} h={8}><path d="M1 7l5.5-6 5.5 6" stroke="#fff" strokeWidth="1.2" /></Svg></TraySlot>
          <TraySlot $w={20}><Svg w={16} h={12}><path d="M1 4h3l4-3v10L4 8H1zM11 4l4 4M15 4l-4 4" stroke="#fff" /></Svg></TraySlot>
          <TraySlot $w={28}>中</TraySlot>
          <TraySlot $w={30}><Fly>iFLY</Fly></TraySlot>
          <Clock>07-20 00:49:55<br />五月三十 星期一</Clock>
          <TrayEdge />
        </Tray>
      </Taskbar>

      <Scribble width="120" height="100" viewBox="114 66 360 300">
        <path d="M230 85Q290 80 330 95Q400 100 440 118Q440 170 432 190Q420 250 412 300Q395 325 370 345Q250 345 150 322" fill="none" stroke="#ee1c25" strokeWidth="11" strokeLinecap="round" />
        <path d="M230 85Q170 115 150 150Q125 200 122 250Q122 310 138 350Q250 360 420 347Q440 320 436 280Q428 230 432 185" fill="none" stroke="#ee1c25" strokeWidth="10" strokeLinecap="round" />
      </Scribble>

      <MarkGlow />
      <Mark width="80" height="90" viewBox="100 60 240 270">
        <polygon points="218,75 325,135 325,240 112,240 112,135" fill="#a9dcf7" />
        <polygon points="218,75 325,135 325,240 260,240 270,100" fill="#8fd3f7" />
        <polygon points="218,75 270,100 160,170 112,135" fill="#d5eefb" />
        <polygon points="112,240 325,240 325,260 218,320 112,260" fill="#0f6c92" />
        <polygon points="112,240 160,240 160,290 112,260" fill="#5e8ea0" />
        <polygon points="218,140 270,170 270,225 218,255 165,225 165,170" fill="#fff" />
        <polygon points="222,150 262,172 222,195 178,172" fill="#d5eefb" />
        <polygon points="178,178 218,200 218,245 178,222" fill="#a5dcf7" />
        <polygon points="224,200 264,178 264,222 224,245" fill="#85cdf2" />
      </Mark>
      <MarkText>WWW.3DSW.COM</MarkText>
    </Page>
  );
}

function NXTile() {
  return (
    <svg width="26" height="26" viewBox="0 0 26 26">
      <path d="M0 4h3v19h20v3H0z" fill="#0f9a9a" />
      <rect x="4" y="0" width="21" height="21" fill="#8c1512" />
      <text x="6" y="16" fontSize="12" fontWeight="bold" fontFamily="Liberation Mono" fill="#fff">NX</text>
    </svg>
  );
}
